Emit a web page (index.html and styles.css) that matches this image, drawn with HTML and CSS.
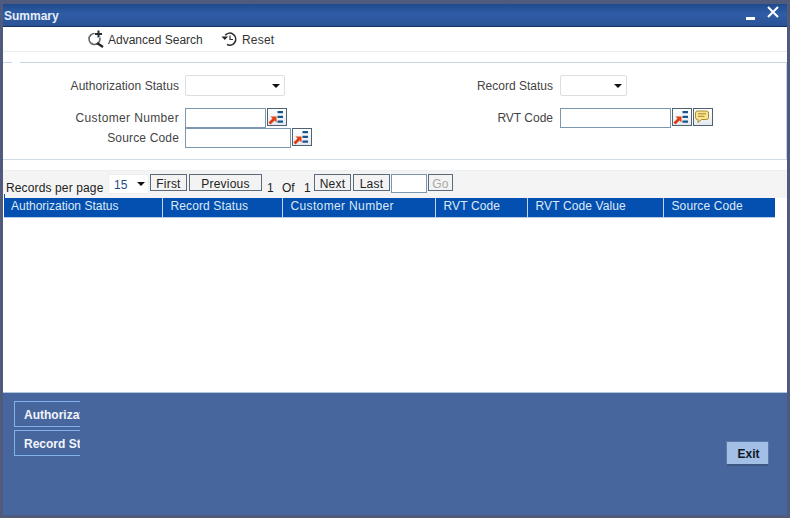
FILE: index.html
```html
<!DOCTYPE html>
<html lang="en">
<head>
<meta charset="utf-8">
<title>Summary</title>
<link rel="stylesheet" href="styles.css">
</head>
<body>
<svg class="defs" width="0" height="0" aria-hidden="true">
  <symbol id="lov" viewBox="0 0 20 18">
    <path d="M2.5 15.5 L7.5 10.5" stroke="#dd3a12" stroke-width="2.8" fill="none"/>
    <path d="M3.5 8.5 H9.5 V14.5 Z" fill="#e2400f"/>
    <path d="M10.5 3h5.5v2.2h-5.5zM10.5 7.8h5.5v2.2h-5.5zM10.5 12.6h5.5v2.2h-5.5z" fill="#17558f"/>
  </symbol>
</svg>
<main class="window">
  <header class="titlebar">
    <h1 class="title">Summary</h1>
    <div class="winctl">
      <span class="minimize"></span>
      <svg class="close" width="12" height="12" viewBox="0 0 12 12"><path d="M1 1 L11 11 M11 1 L1 11" stroke="#fff" stroke-width="2" fill="none"/></svg>
    </div>
  </header>
  <nav class="toolbar">
    <a class="tool tool-search">
      <svg width="17" height="18" viewBox="0 0 17 18"><circle cx="7.5" cy="9" r="5.5" fill="none" stroke="#666" stroke-width="1.6"/><path d="M10 13 L16 17" stroke="#222" stroke-width="2.2"/><path d="M11.5 0v8M7.5 4h8" stroke="#fff" stroke-width="4"/><path d="M11.5 0.5v7M8 4h7" stroke="#2b2b2b" stroke-width="2"/></svg>
      <span class="tool-text">Advanced Search</span>
    </a>
    <a class="tool tool-reset">
      <svg width="17" height="16" viewBox="0 0 17 16"><path d="M4.2 4.2 A6 6 0 1 1 6 13.6" fill="none" stroke="#333" stroke-width="1.7"/><path d="M0.5 5.5 H7 L3.8 9 Z" fill="#222"/><path d="M9 4.5 V8.5 H12" fill="none" stroke="#333" stroke-width="1.2"/></svg>
      <span class="tool-text">Reset</span>
    </a>
  </nav>
  <section class="criteria">
    <span class="notch"></span>
    <div class="col col-left">
      <div class="row row-select">
        <label class="lbl lbl-auth">Authorization Status</label>
        <span class="select select-auth"><i class="caret"></i></span>
      </div>
      <div class="row row-first">
        <label class="lbl lbl-wide">Customer Number</label>
        <span class="input input-cust"></span>
        <button class="ico"><svg width="20" height="18"><use href="#lov"/></svg></button>
      </div>
      <div class="row">
        <label class="lbl lbl-mid">Source Code</label>
        <span class="input input-src"></span>
        <button class="ico"><svg width="20" height="18"><use href="#lov"/></svg></button>
      </div>
    </div>
    <div class="col col-right">
      <div class="row row-select">
        <label class="lbl lbl-r">Record Status</label>
        <span class="select select-rec"><i class="caret"></i></span>
      </div>
      <div class="row row-first">
        <label class="lbl lbl-r">RVT Code</label>
        <span class="input input-rvt"></span>
        <button class="ico"><svg width="20" height="18"><use href="#lov"/></svg></button>
        <button class="ico"><svg width="20" height="18" viewBox="0 0 20 18"><path d="M4.5 3 H13.5 Q15.5 3 15.5 5 V9.5 Q15.5 11.5 13.5 11.5 H8.5 L5 14.5 V11.5 H4.5 Q2.5 11.5 2.5 9.5 V5 Q2.5 3 4.5 3 Z" fill="#f8e592" stroke="#a88a2c"/><path d="M5 5.8h8M5 8.3h6.5" stroke="#a8842a"/></svg></button>
      </div>
    </div>
  </section>
  <section class="pager">
    <span class="rpp">Records per page</span>
    <span class="select select-page">15<i class="caret"></i></span>
    <button class="pg pg-first">First</button>
    <button class="pg pg-prev">Previous</button>
    <span class="num num-1">1</span>
    <span class="num num-of">Of</span>
    <span class="num num-2">1</span>
    <button class="pg pg-next">Next</button>
    <button class="pg pg-last">Last</button>
    <span class="input input-go"></span>
    <button class="pg pg-go">Go</button>
  </section>
  <section class="results">
    <table class="grid">
      <thead>
        <tr>
          <th class="c1">Authorization Status</th>
          <th class="c2">Record Status</th>
          <th class="c3">Customer Number</th>
          <th class="c4">RVT Code</th>
          <th class="c5">RVT Code Value</th>
          <th class="c6">Source Code</th>
        </tr>
      </thead>
    </table>
  </section>
  <footer class="footer">
    <div class="tabs">
      <span class="tab">Authorization Status</span>
      <span class="tab">Record Status</span>
    </div>
    <button class="exit">Exit</button>
  </footer>
</main>
</body>
</html>
```
FILE: styles.css
```css
* { box-sizing: border-box; }
html, body { margin: 0; height: 100%; }
body {
  width: 790px;
  height: 518px;
  overflow: hidden;
  background: #4f5a7c;
  padding: 4px 3px 3px;
  font-family: "Liberation Sans", Arial, sans-serif;
  font-size: 12px;
  color: #3a3a3a;
}
.defs { position: absolute; }
.window {
  height: 511px;
  display: flex;
  flex-direction: column;
  background: #fff;
}
.titlebar {
  height: 23px;
  flex: none;
  display: flex;
  justify-content: space-between;
  background: linear-gradient(#1f4a8c, #2f5da6 45%, #2a5296);
  border-bottom: 1px solid #16335f;
}
.title {
  margin: 0;
  padding: 5px 0 0 1px;
  font-size: 12px;
  line-height: 14px;
  font-weight: bold;
  color: #e8eef8;
}
.winctl { display: flex; padding: 2px 8px 0 0; }
.minimize { width: 9px; height: 3px; margin: 11px 12px 0 0; background: #fff; }
.close { display: block; margin-top: 0; }
.toolbar {
  height: 25px;
  flex: none;
  display: flex;
  align-items: center;
  padding-left: 84px;
  border-bottom: 1px solid #e9ecef;
}
.tool {
  display: flex;
  align-items: center;
  gap: 4px;
  color: #333;
  font-size: 12px;
}
.tool-text { padding-top: 2px; }
.tool-search { width: 134px; }
.tool-reset { letter-spacing: .2px; }
.toolbar svg { flex: none; }
.criteria {
  position: relative;
  height: 98px;
  flex: none;
  margin: 10px 0;
  display: flex;
  border-top: 1px solid #c8d4e0;
  border-bottom: 1px solid #d0dbe6;
  border-right: 1px solid #c8d4e0;
}
.notch { position: absolute; left: 9px; top: -1px; width: 8px; height: 1px; background: #fff; }
.col { padding-top: 12px; }
.col-left { width: 469px; }
.row { display: flex; align-items: center; height: 20px; }
.row-select { height: 21px; margin-bottom: 12px; }
.lbl { width: 176px; text-align: right; margin-right: 6px; color: #444; white-space: nowrap; }
.lbl-auth { letter-spacing: .05px; }
.lbl-wide { letter-spacing: .36px; }
.lbl-mid { letter-spacing: .16px; }
.lbl-r { width: 81px; margin-right: 7px; }
.select {
  position: relative;
  display: block;
  height: 21px;
  background: #fff;
  border: 1px solid #dcdfe2;
  border-radius: 2px;
}
.select-auth { width: 100px; }
.select-rec { width: 67px; }
.caret {
  position: absolute;
  right: 4px;
  top: 8px;
  border: 4px solid transparent;
  border-top: 4px solid #111;
  border-bottom: 0;
}
.input {
  display: block;
  height: 20px;
  background: #fff;
  border: 1px solid #7b98b0;
}
.input-cust { width: 81px; }
.input-src { width: 106px; }
.input-rvt { width: 111px; }
.ico {
  width: 20px;
  height: 18px;
  align-self: flex-start;
  margin: 0 0 0 1px;
  padding: 0;
  background: linear-gradient(#fff, #e4e9ef);
  border: 1px solid #4e6272;
  display: block;
}
.ico svg { display: block; margin: -1px; }
.pager {
  height: 28px;
  flex: none;
  display: flex;
  background: #f4f4f4;
  border-top: 1px solid #eceeef;
  padding-left: 3px;
  position: relative;
}
.pager::after {
  content: "";
  position: absolute;
  left: 1px;
  bottom: 0;
  width: 1px;
  height: 4px;
  background: #0350b0;
}
.rpp { color: #222; margin-top: 10px; width: 99px; line-height: 14px; letter-spacing: .13px; white-space: nowrap; }
.select-page {
  width: 41px;
  height: 20px;
  margin: 3px 1px 0 3px;
  padding: 2px 0 0 5px;
  font-size: 12px;
  line-height: 16px;
  color: #1d4a87;
  border-color: #eee;
}
.select-page .caret { top: 7px; right: 3px; }
.pg {
  height: 17px;
  margin: 3px 2px 0 0;
  padding: 3px 0 0;
  font: 12px/13px "Liberation Sans", Arial, sans-serif;
  letter-spacing: .2px;
  color: #222;
  background: #f3f3f3;
  border: 1px solid #5b6b7b;
  border-radius: 0;
}
.pg-first { width: 37px; }
.pg-prev { width: 73px; }
.pg-next { width: 37px; }
.pg-last { width: 37px; margin-right: 1px; }
.pg-go { width: 25px; color: #a8a8a8; margin-left: 1px; }
.num { margin-top: 10px; line-height: 14px; color: #222; }
.num-1 { margin-left: 3px; width: 15px; }
.num-of { width: 22px; }
.num-2 { width: 10px; }
.input-go { width: 36px; height: 19px; margin-top: 3px; }
.results { flex: 1; padding-left: 1px; }
.grid {
  width: 771px;
  border-collapse: collapse;
  table-layout: fixed;
  background: #0350b0;
  border-bottom: 1px solid #b7cbe5;
}
.grid th {
  height: 19px;
  padding: 0 0 3px 8px;
  font-size: 12px;
  line-height: 14px;
  font-weight: normal;
  text-align: left;
  color: #dfe9f7;
  letter-spacing: .12px;
  border-right: 1px solid #c5d4e8;
}
.grid th:last-child { border-right: 0; }
.grid .c1 { width: 158px; letter-spacing: 0; padding-left: 7px; }
.c2 { width: 120px; }
.grid .c3 { width: 153px; letter-spacing: .36px; }
.c4 { width: 92px; }
.c5 { width: 136px; }
.footer {
  height: 123px;
  flex: none;
  display: flex;
  justify-content: space-between;
  background: #48669e;
  border-top: 1px solid #b0c4de;
  padding: 8px 18px 0 11px;
}
.tabs { display: flex; flex-direction: column; gap: 3px; }
.tab {
  display: block;
  width: 66px;
  height: 26px;
  overflow: hidden;
  white-space: nowrap;
  padding: 6px 0 0 9px;
  font-weight: bold;
  line-height: 14px;
  color: #f2f6fc;
  border: 1px solid #7fb2ea;
  border-right: 0;
}
.exit {
  width: 43px;
  height: 25px;
  margin-top: 40px;
  padding: 2px 0 0 2px;
  background: #a3bfe6;
  border: 1px solid #5d79a8;
  border-bottom: 2px solid #3f5682;
  font: bold 12px "Liberation Sans", Arial, sans-serif;
  color: #101826;
}
```
